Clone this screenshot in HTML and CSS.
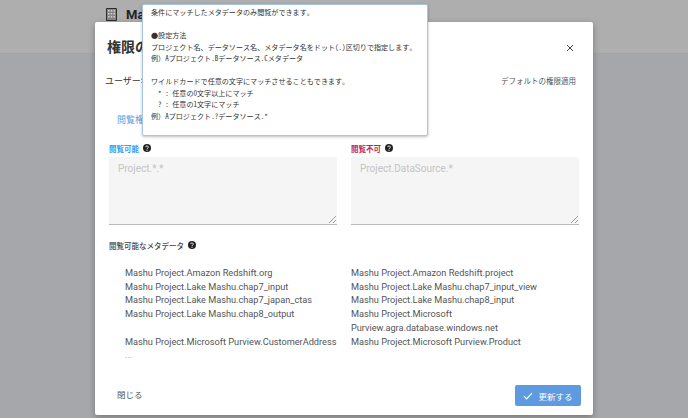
FILE: index.html
```html
<!DOCTYPE html>
<html lang="ja">
<head>
    <meta charset="UTF-8">
    <title>権限の設定</title>
    <link rel="stylesheet" href="styles.css">
</head>
<body>
    <header class="topbar">
        <svg class="logo" viewBox="0 0 11 13" width="11" height="13">
            <path fill="#8a8484" stroke="#2e2e2e" stroke-width="1" d="M.5.5h10v12H.5z"/>
            <path fill="#cfcfcf" d="M2 2h1.5v1.5H2zM4.75 2h1.5v1.5h-1.5zM7.5 2H9v1.5H7.5zM2 5h1.5v1.5H2zM4.75 5h1.5v1.5h-1.5zM7.5 5H9v1.5H7.5zM2 8h1.5v1.5H2zM4.75 8h1.5v1.5h-1.5zM7.5 8H9v1.5H7.5z"/>
        </svg>
        <span class="brand">Mashu</span>
    </header>

    <div class="dialog">
        <div class="dialog-head">
            <h1>権限の設定</h1>
            <svg class="close" viewBox="0 0 8 8" width="8" height="8">
                <path d="M1 1l6 6M7 1L1 7" stroke="#444" stroke-width="1" fill="none"/>
            </svg>
        </div>

        <div class="user-row">
            <span class="user-label">ユーザー名</span>
            <span class="default-link">デフォルトの権限適用</span>
        </div>

        <div class="tabs"><span class="tab">閲覧権限</span></div>

        <div class="fields">
            <div class="field">
                <div class="label label-ok">閲覧可能
                    <svg class="help" viewBox="0 0 8 8" width="8" height="8"><circle cx="4" cy="4" r="4" fill="#222"/><path d="M2.7 3.1a1.3 1.2 0 1 1 1.9 1.1c-.4.2-.6.4-.6.9" stroke="#fff" stroke-width=".9" fill="none"/><path d="M3.5 5.7h1v1h-1z" fill="#fff"/></svg>
                </div>
                <div class="textarea">Project.*.*
                    <svg class="grip" viewBox="0 0 7 7" width="7" height="7"><path d="M0 7l7-7M4 7l3-3" stroke="#888" stroke-width=".8"/></svg>
                </div>
            </div>
            <div class="field">
                <div class="label label-ng">閲覧不可
                    <svg class="help" viewBox="0 0 8 8" width="8" height="8"><circle cx="4" cy="4" r="4" fill="#222"/><path d="M2.7 3.1a1.3 1.2 0 1 1 1.9 1.1c-.4.2-.6.4-.6.9" stroke="#fff" stroke-width=".9" fill="none"/><path d="M3.5 5.7h1v1h-1z" fill="#fff"/></svg>
                </div>
                <div class="textarea">Project.DataSource.*
                    <svg class="grip" viewBox="0 0 7 7" width="7" height="7"><path d="M0 7l7-7M4 7l3-3" stroke="#888" stroke-width=".8"/></svg>
                </div>
            </div>
        </div>

        <div class="label label-meta">閲覧可能なメタデータ
            <svg class="help" viewBox="0 0 8 8" width="8" height="8"><circle cx="4" cy="4" r="4" fill="#222"/><path d="M2.7 3.1a1.3 1.2 0 1 1 1.9 1.1c-.4.2-.6.4-.6.9" stroke="#fff" stroke-width=".9" fill="none"/><path d="M3.5 5.7h1v1h-1z" fill="#fff"/></svg>
        </div>

        <ul class="meta-list">
            <li>Mashu Project.Amazon Redshift.org</li>
            <li>Mashu Project.Amazon Redshift.project</li>
            <li>Mashu Project.Lake Mashu.chap7_input</li>
            <li>Mashu Project.Lake Mashu.chap7_input_view</li>
            <li>Mashu Project.Lake Mashu.chap7_japan_ctas</li>
            <li>Mashu Project.Lake Mashu.chap8_input</li>
            <li>Mashu Project.Lake Mashu.chap8_output</li>
            <li>Mashu Project.Microsoft Purview.agra.database.windows.net</li>
            <li>Mashu Project.Microsoft Purview.CustomerAddress</li>
            <li>Mashu Project.Microsoft Purview.Product</li>
            <li class="more">...</li>
        </ul>

        <div class="dialog-foot">
            <button class="btn-close">閉じる</button>
            <button class="btn-update">
                <svg viewBox="0 0 10 8" width="10" height="8"><path d="M1 4.2l2.6 2.6L9 1.2" stroke="#fff" stroke-width="1.2" fill="none"/></svg>
                更新する
            </button>
        </div>
    </div>

    <div class="tooltip">条件にマッチしたメタデータのみ閲覧ができます。

<span class="bullet">●</span>設定方法
プロジェクト名、データソース名、メタデータ名をドット(.)区切りで指定します。
例）Aプロジェクト.Bデータソース.Cメタデータ

ワイルドカードで任意の文字にマッチさせることもできます。
  * : 任意の0文字以上にマッチ
  ? : 任意の1文字にマッチ
例）Aプロジェクト.?データソース.*</div>
</body>
</html>
```

FILE: styles.css
```css
* {
    box-sizing: border-box;
}
html, body {
    height: 100%;
}
body {
    margin: 0;
    overflow: hidden;
    background: #a6a7aa;
    color: #333;
    font-family: Roboto, "Noto Sans CJK JP", sans-serif;
}
.topbar {
    height: 54px;
    padding: 7px 0 0 106px;
    display: flex;
    align-items: flex-start;
    gap: 9px;
    background: #aeaeae;
    border-bottom: 1px solid #a3a3a3;
}
.logo {
    margin-top: 1px;
}
.brand {
    font-size: 13px;
    font-weight: 700;
    color: #222;
}
.dialog {
    position: absolute;
    left: 95px;
    top: 22px;
    width: 498px;
    height: 393px;
    display: flex;
    flex-direction: column;
    padding: 0 12px 0 10px;
    background: #fff;
    border-radius: 2px;
    box-shadow: 0 2px 6px rgba(0, 0, 0, 0.3);
}
.dialog-head {
    height: 49px;
    padding: 17px 7px 0 2px;
    display: flex;
    justify-content: space-between;
    align-items: flex-start;
}
.dialog-head h1 {
    margin: 0;
    font-size: 14px;
    line-height: 17px;
    font-weight: 700;
    color: #333;
}
.close {
    margin-top: 5px;
}
.user-row {
    height: 18px;
    padding-right: 5px;
    display: flex;
    justify-content: space-between;
    align-items: center;
    font-size: 9px;
    color: #333;
}
.default-link {
    font-size: 7.5px;
    color: #555;
}
.tabs {
    height: 32px;
    padding: 25px 0 0 12px;
    font-size: 9px;
    line-height: 12px;
    color: #5a9fe0;
}
.fields {
    margin-top: 21px;
    padding: 0 2px 0 4px;
    display: flex;
    gap: 14px;
}
.field {
    flex: 1;
}
.label {
    display: flex;
    align-items: center;
    gap: 4px;
    height: 12px;
    font-size: 7.5px;
    font-weight: 700;
}
.label-ok {
    color: #2f9bef;
}
.label-ng {
    color: #c2234a;
}
.label-meta {
    margin: 14px 0 0 4px;
    color: #444;
    font-weight: 500;
}
.textarea {
    position: relative;
    height: 68px;
    margin-top: 3px;
    padding: 5px 9px;
    background: #f5f5f5;
    border-bottom: 1px solid #bbb;
    border-radius: 2px 2px 0 0;
    font-size: 10px;
    line-height: 14px;
    color: #c4c4c4;
}
.grip {
    position: absolute;
    right: 1px;
    bottom: 1px;
}
.meta-list {
    margin: 15px 0 0 20px;
    padding: 0;
    list-style: none;
    display: grid;
    grid-template-columns: 226px 226px;
    font-size: 9.2px;
    line-height: 13.7px;
    color: #555;
}
.more {
    color: #999;
}
.dialog-foot {
    margin-top: auto;
    height: 30px;
    padding: 0 0 9px 0;
    display: flex;
    justify-content: space-between;
    align-items: center;
}
.btn-close {
    margin: 0 0 3px 12px;
    padding: 0;
    border: 0;
    background: none;
    font: inherit;
    font-size: 8.5px;
    color: #555;
}
.btn-update {
    width: 66px;
    height: 21px;
    padding: 0;
    display: flex;
    align-items: center;
    justify-content: center;
    gap: 5px;
    border: 0;
    border-radius: 2px;
    background: #5e9ae0;
    font: inherit;
    font-size: 8.5px;
    color: #fff;
}
.tooltip {
    position: absolute;
    left: 142px;
    top: 4px;
    width: 286px;
    height: 132px;
    padding: 2px 8px;
    background: #fff;
    border: 1px solid #a9c4e4;
    border-radius: 2px;
    box-shadow: 0 1px 3px rgba(0, 0, 0, 0.25);
    white-space: pre;
    font-family: "Noto Sans Mono CJK JP", "DejaVu Sans Mono", "Noto Sans CJK JP", monospace;
    font-size: 7.08px;
    line-height: 11.5px;
    color: #333;
}
.bullet {
    font-family: "Noto Sans CJK JP", sans-serif;
}
```
